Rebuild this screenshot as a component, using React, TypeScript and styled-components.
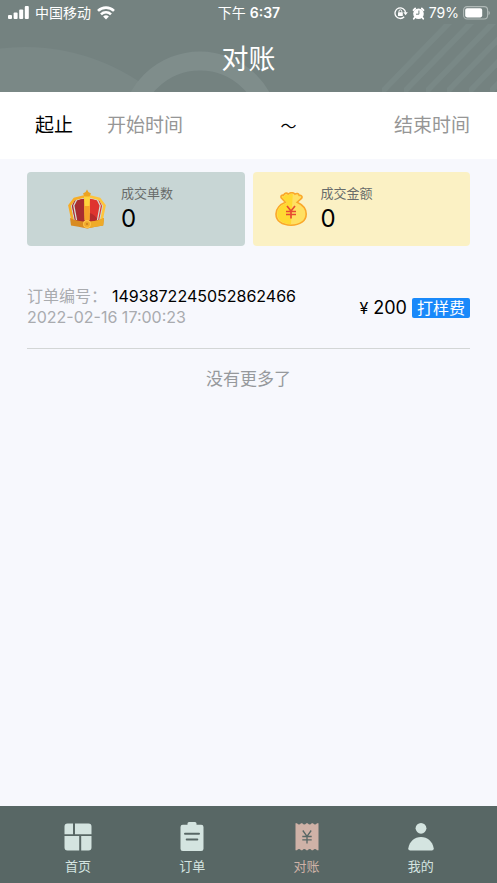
import React from "react";
import styled, { createGlobalStyle } from "styled-components";

const GlobalStyle = createGlobalStyle`
  * { box-sizing: border-box; }
  body {
    margin: 0;
    background: #f7f8fd;
    color: #000;
    font-family: Inter, "Noto Sans CJK SC", sans-serif;
  }
  button, input { font: inherit; border: 0; padding: 0; background: none; }
  h1, p { margin: 0; font-weight: 400; }
`;

const Screen = styled.div`
  min-height: 100vh;
  display: flex;
  flex-direction: column;
`;

const Header = styled.header`
  position: relative;
  height: 92px;
  overflow: hidden;
  background: #748280;
  color: #fff;
`;

const HeaderArt = styled.svg`
  position: absolute;
  inset: 0;
  width: 100%;
  height: 100%;
`;

const StatusBar = styled.div`
  position: relative;
  display: grid;
  grid-template-columns: 1fr auto 1fr;
  align-items: center;
  height: 26px;
  padding: 0 7px 0 8px;
  font-size: 14px;
  line-height: 20px;
`;

const StatusGroup = styled.div<{ $end?: boolean }>`
  display: flex;
  align-items: center;
  justify-content: ${(p) => (p.$end ? "flex-end" : "flex-start")};
  gap: ${(p) => (p.$end ? 4 : 6)}px;
  svg { display: block; flex: none; }
`;

const Clock = styled.time`
  font-weight: 400;
`;

const ClockDigits = styled.span`
  font-weight: 600;
`;

const Title = styled.h1`
  position: relative;
  text-align: center;
  font-size: 27px;
  line-height: 40px;
  padding-top: 14px;
`;

const DateFilter = styled.form`
  display: flex;
  align-items: center;
  height: 67px;
  padding: 0 27px 0 35px;
  background: #fff;
  font-size: 19px;
  line-height: 32px;
`;

const FilterLabel = styled.span`
  width: 72px;
  flex: none;
`;

const Tilde = styled.span`
  font-size: 16px;
`;

const DateInput = styled.input<{ $end?: boolean }>`
  flex: 1;
  min-width: 0;
  height: 34px;
  text-align: ${(p) => (p.$end ? "right" : "left")};
  outline-color: #748280;
  &::placeholder { color: #969696; opacity: 1; }
`;

const Main = styled.main`
  flex: 1;
  padding: 13px 27px;
`;

const Stats = styled.section`
  display: grid;
  grid-template-columns: 1fr 1fr;
  gap: 8px;
`;

const StatCard = styled.div<{ $color: string; $inset: number }>`
  display: flex;
  align-items: center;
  gap: 14px;
  height: 74px;
  padding-left: ${(p) => p.$inset}px;
  border-radius: 4px;
  background: ${(p) => p.$color};
  svg { display: block; flex: none; }
`;

const StatLabel = styled.p`
  color: #686c6a;
  font-size: 13px;
  line-height: 20px;
`;

const StatValue = styled.p`
  font-size: 24px;
  line-height: 32px;
`;

const Order = styled.article`
  display: flex;
  justify-content: space-between;
  align-items: center;
  margin-top: 40px;
  padding-bottom: 20px;
  border-bottom: 1px solid #d3d6d6;
`;

const OrderLine = styled.p<{ $muted?: boolean }>`
  display: flex;
  align-items: center;
  height: 21px;
  gap: 5px;
  color: ${(p) => (p.$muted ? "#a9abaf" : "#000")};
  font-size: 16px;
  line-height: 21px;
`;

const Muted = styled.span`
  color: #a9abaf;
`;

const Price = styled.div`
  display: flex;
  align-items: center;
  gap: 5px;
  padding-top: 2px;
  font-size: 18px;
  line-height: 22px;
`;

const Currency = styled.span`
  font-size: 16px;
`;

const Tag = styled.span`
  padding: 0 5px;
  border-radius: 2px;
  background: #1989fa;
  color: #fff;
  font-size: 16px;
  line-height: 20px;
`;

const EndNote = styled.p`
  margin-top: 18px;
  color: #96999c;
  font-size: 17px;
  line-height: 24px;
  text-align: center;
`;

const TabBar = styled.nav`
  position: sticky;
  bottom: 0;
  display: grid;
  grid-template-columns: repeat(4, 1fr);
  height: 77px;
  padding: 0 19px 0 21px;
  background: #586765;
`;

const Tab = styled.button<{ $active?: boolean }>`
  display: flex;
  flex-direction: column;
  align-items: center;
  gap: 4px;
  padding-top: 16px;
  color: ${(p) => (p.$active ? "#cfb2a7" : "#d4e4e0")};
  font-size: 13px;
  line-height: 20px;
  cursor: pointer;
  svg { display: block; }
`;

const SignalIcon = () => (
  <svg width="21" height="14" viewBox="0 0 21 14" fill="#fff">
    <rect x="0" y="9" width="4" height="4" rx="1" />
    <rect x="5.6" y="6.5" width="4" height="6.5" rx="1" />
    <rect x="11.2" y="3.5" width="4" height="9.5" rx="1" />
    <rect x="16.8" y="0" width="4" height="13" rx="1" />
  </svg>
);

const WifiIcon = () => (
  <svg width="18" height="14" viewBox="0 0 18 14" fill="none" stroke="#fff" strokeWidth="2.6">
    <path d="M1 4.9a11.5 11.5 0 0 1 16 0" />
    <path d="M4 8.3a7.1 7.1 0 0 1 10 0" />
    <path d="M9 13.5 6.1 10.6a4.1 4.1 0 0 1 5.8 0Z" fill="#fff" stroke="none" />
  </svg>
);

const RotationLockIcon = () => (
  <svg width="14" height="14" viewBox="0 0 14 14" fill="none" stroke="#fff" strokeWidth="1.3">
    <path d="M10.2 10.8A5.3 5.3 0 1 1 11.6 6.6" />
    <path d="M9.300 6.300h4.500l-2.200 2.900Z" fill="#fff" stroke="none" />
    <rect x="4" y="6.2" width="4.8" height="3.8" rx=".6" fill="#fff" stroke="none" />
    <path d="M5 6.5V5.3a1.4 1.4 0 0 1 2.8 0v1.2" strokeWidth="1" />
  </svg>
);

const AlarmIcon = () => (
  <svg width="13" height="13" viewBox="0 0 13 13">
    <circle cx="6.5" cy="6.8" r="5.3" fill="#fff" />
    <path d="M1.500 3.200 3.200 1.500M9.800 1.500l1.700 1.700M2.800 10.500l-1 1.200M10.200 10.500l1 1.200" stroke="#fff" strokeWidth="1.800" strokeLinecap="round" />
    <path d="M6.9 3.5v3.7H4" stroke="#748280" fill="none" />
  </svg>
);

const BatteryIcon = () => (
  <svg width="27" height="14" viewBox="0 0 27 14">
    <rect x=".6" y=".6" width="24" height="12.400" rx="3.5" fill="none" stroke="#b0b9b7" strokeWidth="1.1" />
    <rect x="2.2" y="2.2" width="17" height="9.200" rx="1.8" fill="#fff" />
    <path d="M25.500 4.800c1.800.8 1.800 3.400 0 4.200Z" fill="#b0b9b7" />
  </svg>
);

const CrownIcon = () => (
  <svg width="40" height="40" viewBox="0 0 40 40">
    <path d="M7.500 11.500Q14 10 20 9.500q6 .5 12.500 2L35 17l-3 14.500q-12 3-24 0L5 17Z" fill="#df342f" />
    <path d="M7.500 11.500Q14 10 20 9.500V33q-7 0-12-1.500L5 17Z" fill="#a82c30" />
    <path d="M22 24q6 1 9 7.500l-10 1.800Z" fill="#b62a2b" />
    <path d="M19 7.500 9.500 11 6.800 16.500 9.500 31M21 7.500l9.500 3.500 2.700 5.500L30.500 31" fill="none" stroke="#d3ded5" strokeWidth="1.300" />
    <path d="M19 7 7.500 10 2.500 16.500 5.500 31" fill="none" stroke="#f7ad27" strokeWidth="2.600" />
    <path d="M21 7l11.500 3 5 6.500-3 14.500" fill="none" stroke="#ffc43b" strokeWidth="2.600" />
    <path d="m17 7.500 3-2 3 2-.4 23-2.600 3-2.500-3Z" fill="#ffd33b" />
    <path d="M17.200 17h5.500l-.7 15.500h-4Z" fill="#f7a22a" />
    <path d="m20 .5 1.400 2.500L24 4.500 22.500 7.500h-5L16 4.500 18.600 3Z" fill="#eca321" />
    <path d="M3 29q8 3.800 17 3.800T37 29l-.8 7.500q-7 .8-16.200 3-9-2.200-16-3Z" fill="#d98b21" />
    <path d="M20 32.800q9 0 17-3.800l-.8 7.500q-7 .8-16.200 3Z" fill="#efab29" />
    <circle cx="20" cy="35" r="3.400" fill="#efaa2c" stroke="#ffc44b" strokeWidth="1.100" />
    <circle cx="20" cy="35" r="1" fill="#cb781c" />
  </svg>
);

const MoneyBagIcon = () => (
  <svg width="32" height="34" viewBox="0 0 32 34">
    <path d="M10.400 10.300 6.200 5.800c-.8-2 .6-3 2.300-2.600C10 .6 12 .7 13.200 2.200 15.700.2 18.200.4 20 2.200c1.800-1.300 3.600-.8 4.200 1.200 2-.5 3.500 1 2.500 2.800l-4.500 4c5.600 2.600 9 7 9 11.700C31.200 29 25 33.200 16 33.200S1 29 1 21.900c0-5 4-9.500 9.400-11.600Z" fill="#ffe062" stroke="#faa82a" strokeWidth="1.600" />
    <path d="M17.800 2.200C15.500 1.500 14.500 2 13 3.500 11.800 2 10.500 2.200 9.400 4.500 7.500 4 6.800 4.700 7.500 5.800L12 10.800C6 13 2.300 17 2.300 22c0 6 5.500 10 13.700 10.100Z" fill="#ffd932" />
    <path d="m12 14 4 5 4-5M11 19.500h10M11 22.500h10M16 19v7.500" fill="none" stroke="#e74a32" strokeWidth="1.700" />
  </svg>
);

const HomeIcon = () => (
  <svg width="30" height="30" viewBox="0 0 30 30" fill="currentColor">
    <path d="M4.500 1.500H10v10.800H1.500V4.500a3 3 0 0 1 3-3ZM12 1.500h13.500a3 3 0 0 1 3 3v7.800H12ZM1.500 14H16.200v14.500H4.500a3 3 0 0 1-3-3ZM18.200 14h10.300v11.500a3 3 0 0 1-3 3h-7.300Z" />
  </svg>
);

const OrderIcon = () => (
  <svg width="30" height="30" viewBox="0 0 30 30" fill="currentColor">
    <path d="M12 0h6q1.500 0 1.500 1.500v1.300h4.700q2.300 0 2.300 2.300v21.600q0 2.300-2.300 2.300H5.800q-2.300 0-2.300-2.300V5.100q0-2.300 2.300-2.300h4.700V1.500Q10.500 0 12 0Z" />
    <path d="M8 11.800h14M9.700 17.500h10.600" stroke="#586765" strokeWidth="2" strokeLinecap="round" />
  </svg>
);

const ReceiptIcon = () => (
  <svg width="30" height="30" viewBox="0 0 30 30" fill="currentColor">
    <path d="M3.500 1.200h1.500q2 2.600 4 0h1.300q2 2.600 4 0h1.400q2 2.600 4 0H21q2 2.600 4 0h1.500v27H25q-2-2.600-4 0h-1.300q-2-2.600-4 0h-1.400q-2-2.600-4 0H9q-2-2.600-4 0H3.500Z" />
    <path d="m10.800 8.500 4.200 5.800 4.200-5.800M10.300 14.500h9.400M10.300 17.800h9.400M15 14v7.500" fill="none" stroke="#586765" strokeWidth="1.300" />
  </svg>
);

const ProfileIcon = () => (
  <svg width="30" height="30" viewBox="0 0 30 30" fill="currentColor">
    <circle cx="15" cy="6.300" r="5.400" />
    <path d="M4.300 28.500h21.400q2.300 0 2-2.300C26.500 19.500 21.500 15 15 15S3.500 19.500 2.300 26.200q-.3 2.300 2 2.300Z" />
  </svg>
);

const stripes = [382, 404, 426, 447, 469, 490];

const tabs = [
  { label: "首页", Icon: HomeIcon },
  { label: "订单", Icon: OrderIcon },
  { label: "对账", Icon: ReceiptIcon, active: true },
  { label: "我的", Icon: ProfileIcon },
];

export default function App() {
  return (
    <Screen lang="zh-CN">
      <GlobalStyle />
      <Header>
        <HeaderArt viewBox="0 0 497 92" preserveAspectRatio="xMidYMax slice" aria-hidden="true">
          <circle cx="25" cy="253" r="206" fill="#7a8886" />
          <circle cx="200" cy="131" r="70" fill="none" stroke="#7f8d8b" strokeWidth="19" />
          {stripes.map((x) => (
            <path key={x} d={`M${x} 92v-4l62-64h8l-66 68Z`} fill="#798886" />
          ))}
        </HeaderArt>
        <StatusBar>
          <StatusGroup>
            <SignalIcon />
            <span>中国移动</span>
            <WifiIcon />
          </StatusGroup>
          <Clock>
            下午 <ClockDigits>6:37</ClockDigits>
          </Clock>
          <StatusGroup $end>
            <RotationLockIcon />
            <AlarmIcon />
            <span>79%</span>
            <BatteryIcon />
          </StatusGroup>
        </StatusBar>
        <Title>对账</Title>
      </Header>
      <DateFilter>
        <FilterLabel>起止</FilterLabel>
        <DateInput aria-label="开始时间" placeholder="开始时间" />
        <Tilde>～</Tilde>
        <DateInput $end aria-label="结束时间" placeholder="结束时间" />
      </DateFilter>
      <Main>
        <Stats>
          <StatCard $color="#c8d6d5" $inset={40}>
            <CrownIcon />
            <div>
              <StatLabel>成交单数</StatLabel>
              <StatValue>0</StatValue>
            </div>
          </StatCard>
          <StatCard $color="#fbf1c4" $inset={22}>
            <MoneyBagIcon />
            <div>
              <StatLabel>成交金额</StatLabel>
              <StatValue>0</StatValue>
            </div>
          </StatCard>
        </Stats>
        <Order>
          <div>
            <OrderLine>
              <Muted>订单编号：</Muted>
              <span>1493872245052862466</span>
            </OrderLine>
            <OrderLine $muted>2022-02-16 17:00:23</OrderLine>
          </div>
          <Price>
            <Currency>¥</Currency>
            <span>200</span>
            <Tag>打样费</Tag>
          </Price>
        </Order>
        <EndNote>没有更多了</EndNote>
      </Main>
      <TabBar>
        {tabs.map(({ label, Icon, active }) => (
          <Tab key={label} type="button" $active={active} aria-current={active ? "page" : undefined}>
            <Icon />
            {label}
          </Tab>
        ))}
      </TabBar>
    </Screen>
  );
}
